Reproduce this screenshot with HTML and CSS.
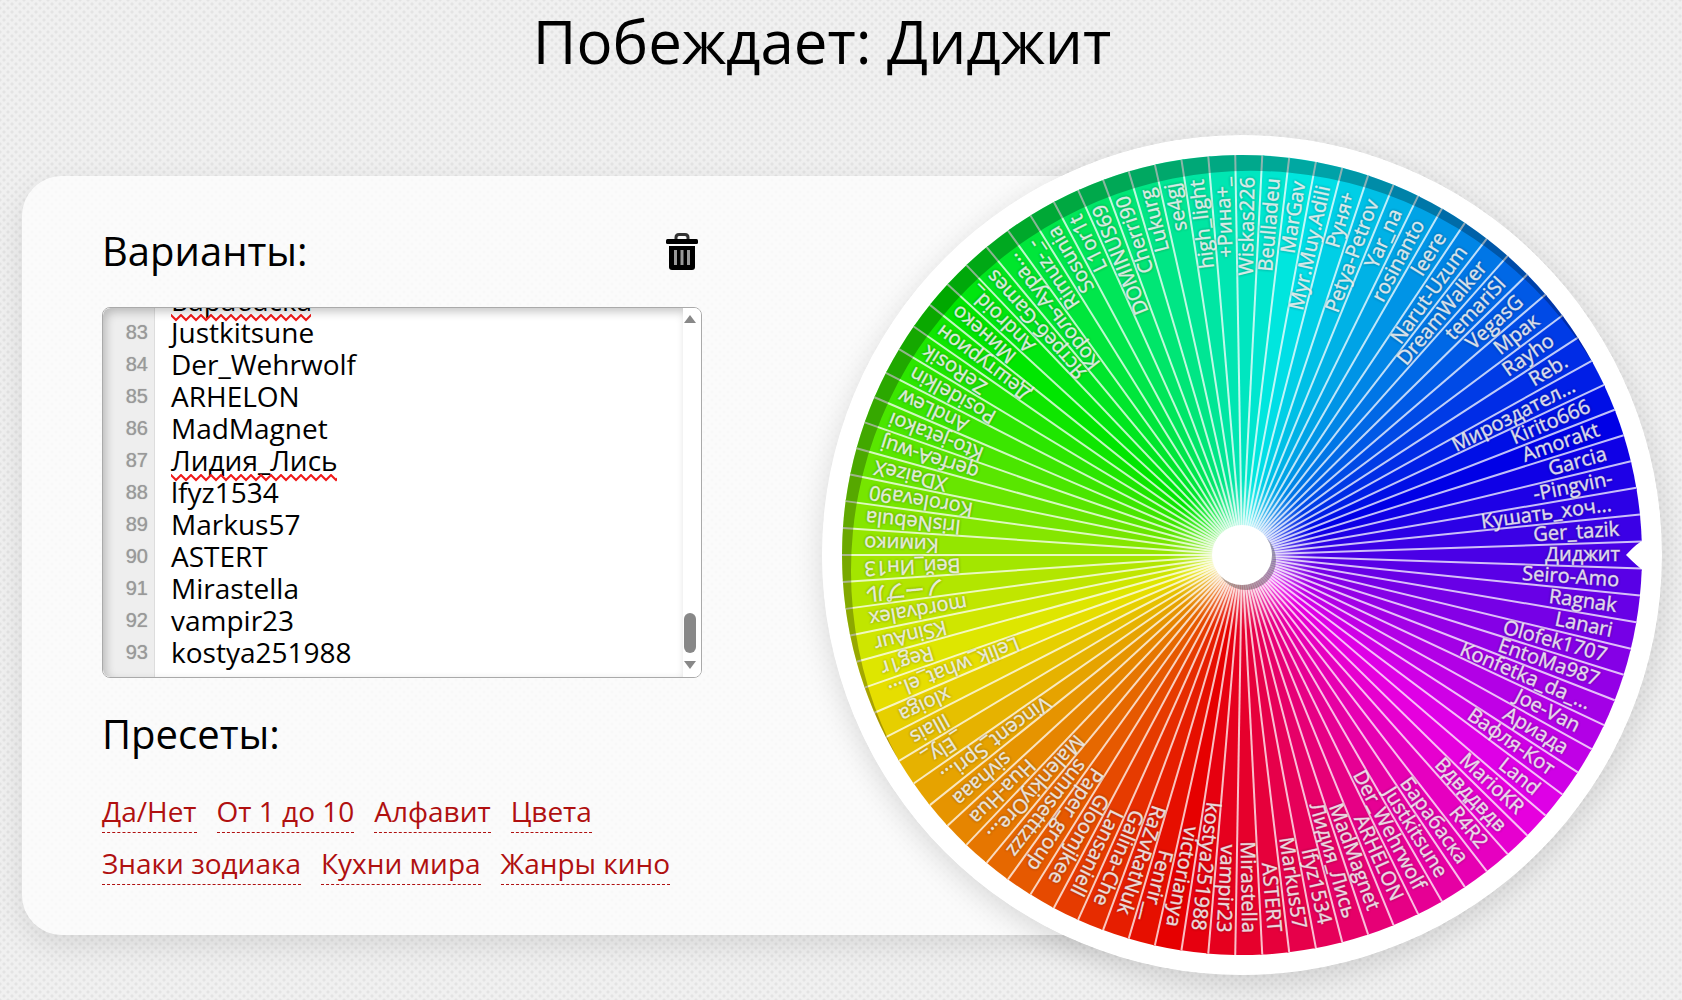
FILE: index.html
```html
<!DOCTYPE html>
<html lang="ru">
<head>
  <meta charset="utf-8">
  <title>Колесо фортуны</title>
  <link rel="stylesheet" href="styles.css">
</head>
<body>
  <main class="page">
    <h1 class="winner">Побеждает: Диджит</h1>
    <div class="stage">
      <section class="card">
        <div class="card-body">
          <div class="card-head">
            <h2 class="heading"><label for="variants">Варианты:</label></h2>
            <button class="clear" type="button" aria-label="Очистить">
              <svg viewBox="0 0 34 38" width="34" height="38" aria-hidden="true">
                <path d="M11 7V4.500Q11 1.500 14 1.500H20Q23 1.500 23 4.500V7" fill="none" stroke="#333" stroke-width="3"/>
                <rect x="1" y="6" width="32" height="5" rx="1.500"/>
                <path d="M4 13H30V34Q30 37 27 37H7Q4 37 4 34Z"/>
                <path d="M10.500 17V32M17 17V32M23.500 17V32" stroke="#999" stroke-width="3"/>
              </svg>
            </button>
          </div>
          <div class="editor">
            <div class="gutter" aria-hidden="true"><pre class="numbers" id="numbers"></pre></div>
            <textarea class="variants" id="variants" spellcheck="false"></textarea>
            <svg class="squiggle squiggle-top" aria-hidden="true"><rect width="100%" height="8" fill="url(#wave)"/></svg>
            <svg class="squiggle squiggle-mid" aria-hidden="true">
              <defs>
                <pattern id="wave" width="10" height="8" patternUnits="userSpaceOnUse">
                  <path d="M-1 0L5 6L11 0" fill="none" stroke="#f01818" stroke-width="2"/>
                </pattern>
              </defs>
              <rect width="100%" height="8" fill="url(#wave)"/>
            </svg>
            <div class="scrollbar" aria-hidden="true">
              <span class="arrow arrow-up"></span>
              <span class="thumb"></span>
              <span class="arrow arrow-down"></span>
            </div>
          </div>
          <h2 class="heading">Пресеты:</h2>
          <nav class="presets">
            <a href="#yesno">Да/Нет</a>
            <a href="#ten">От 1 до 10</a>
            <a href="#alphabet">Алфавит</a>
            <a href="#colors">Цвета</a>
            <a href="#zodiac">Знаки зодиака</a>
            <a href="#cuisines">Кухни мира</a>
            <a href="#genres">Жанры кино</a>
          </nav>
        </div>
      </section>
      <svg class="wheel" viewBox="-420 -420 840 840" role="img" aria-label="Колесо">
        <defs>
          <clipPath id="disc"><circle r="400"/></clipPath>
          <radialGradient id="glow">
            <stop offset="0" stop-color="#fff" stop-opacity=".7"/>
            <stop offset=".4" stop-color="#fff" stop-opacity=".4"/>
            <stop offset="1" stop-color="#fff" stop-opacity="0"/>
          </radialGradient>
        </defs>
        <circle r="420" fill="#fff"/>
        <g id="sectors"></g>
        <g id="labels" class="labels"></g>
        <path class="rim" clip-path="url(#disc)" fill-rule="evenodd" d="M-420 -420H420V420H-420ZM-391 16a400 400 0 1 0 800 0a400 400 0 1 0 -800 0Z"/>
        <path d="M410 -20L402 -15Q396 -13 384 0Q396 12 402 16L410 20Z" fill="#fff"/>
        <circle cx="4" cy="5" r="30" fill="#000" fill-opacity=".3"/>
        <circle r="30" fill="#fff"/>
      </svg>
    </div>
  </main>
  <script src="wheel.js"></script>
</body>
</html>
```
FILE: styles.css
```css
* {
  box-sizing: border-box;
}

body {
  margin: 0;
  font-family: "Open Sans", "Noto Sans", "Noto Sans CJK JP", sans-serif;
  color: #000;
  background-color: #f0f0f0;
  background-image:
    radial-gradient(circle, rgba(0, 0, 0, .055) 1px, transparent 2px),
    radial-gradient(circle, rgba(0, 0, 0, .055) 1px, transparent 2px);
  background-size: 8px 8px;
  background-position: 0 0, 4px 4px;
}

.page {
  min-height: 100vh;
  padding: 0 20px 24px 22px;
}

.winner {
  margin: 0;
  height: 135px;
  padding-right: 40px;
  font-size: 60px;
  font-weight: 400;
  line-height: 82px;
  text-align: center;
}

.stage {
  display: grid;
  grid-template-columns: minmax(0, 800fr) minmax(0, 401fr) minmax(0, 439fr);
  align-items: center;
}

.card {
  grid-area: 1 / 1 / 2 / 3;
  padding: 47px 80px 50px;
  border-radius: 40px;
  background: rgba(255, 255, 255, .75);
  box-shadow: 0 10px 30px rgba(0, 0, 0, .1);
}

.card-body {
  max-width: 600px;
}

.card-head {
  display: flex;
  justify-content: space-between;
  align-items: center;
}

.heading {
  margin: 0;
  font-size: 40px;
  font-weight: 400;
  line-height: 56px;
}

.clear {
  display: block;
  padding: 2px 0 0;
  margin-right: 3px;
  border: 0;
  background: none;
  line-height: 0;
}

.editor {
  position: relative;
  display: flex;
  height: 371px;
  margin: 28px 0;
  overflow: hidden;
  border: 1px solid #aaa;
  border-radius: 8px;
  background: #fff;
}

.editor::after {
  content: "";
  position: absolute;
  inset: 0 18px 0 0;
  box-shadow: inset 3px 4px 10px rgba(0, 0, 0, .22);
  border-radius: 8px 0 0 8px;
  pointer-events: none;
}

.gutter {
  width: 52px;
  overflow: hidden;
  border-right: 1px solid #ddd;
  background: #eee;
}

.numbers {
  margin: 0;
  padding: 9px 6px 9px 0;
  font: 20px/32px "Liberation Sans", Arial, sans-serif;
  text-align: right;
  color: #999;
  text-shadow: 0 0 1px #aaa;
}

.variants {
  flex: 1;
  min-width: 0;
  height: 100%;
  padding: 9px 16px;
  border: 0;
  outline: 0;
  resize: none;
  background: none;
  font: 28px/32px "Open Sans", "Noto Sans", "Noto Sans CJK JP", sans-serif;
  color: #000;
  white-space: pre;
  scrollbar-width: none;
}

.squiggle {
  position: absolute;
  left: 68px;
  height: 8px;
}

.squiggle-top {
  top: 6px;
  width: 140px;
}

.squiggle-mid {
  top: 166px;
  width: 166px;
}

.scrollbar {
  position: absolute;
  inset: 0 0 0 auto;
  width: 20px;
  padding: 7px 3px 8px 0;
  display: flex;
  flex-direction: column;
  align-items: center;
  background: #fff;
}

.arrow {
  border: 6px solid transparent;
}

.arrow-up {
  border-top: 0;
  border-bottom: 8px solid #888;
}

.arrow-down {
  border-bottom: 0;
  border-top: 8px solid #888;
}

.thumb {
  width: 12px;
  height: 40px;
  margin: auto 0 8px;
  border-radius: 6px;
  background: #888;
}

.presets {
  display: flex;
  flex-wrap: wrap;
  gap: 11px 20px;
  margin-top: 30px;
}

.presets a {
  padding-bottom: 2px;
  border-bottom: 1px dashed #b01010;
  font-size: 28px;
  line-height: 38px;
  color: #b01010;
  text-decoration: none;
}

.wheel {
  grid-area: 1 / 2 / 2 / 4;
  width: 100%;
  border-radius: 50%;
  box-shadow: 0 8px 30px rgba(0, 0, 0, .14);
}

.labels {
  font-size: 20px;
  fill: #fff;
  fill-opacity: .9;
  stroke: #fff;
  stroke-opacity: .4;
  stroke-width: 1;
  text-anchor: end;
  text-shadow: 0 0 3px rgba(0, 0, 0, .35);
}

.divider {
  stroke: #fff;
  stroke-opacity: .75;
  stroke-width: 2;
}

.rim {
  fill: #000;
  fill-opacity: .27;
}
```
FILE: wheel.js
```js
const names = [
  "victorianya", "Fenrir__", "RaZvRatNuk", "Galina-Che", "Lansaniell", "Gloomjkee",
  "Paper_group", "sunnsetttzzz", "MalenkiyOre...", "Hua-Hua", "sivhaaa", "Vincent_Spri...\u00a0",
  "_Ely_", "Illais", "xloiga", "Lelik_what_el...", "Reg1r", "KSinAur", "mordvalex",
  "ノープル", "Вей_Ин13", "Кимико", "IrisNebula", "Koroleva90", "XDaizeX", "qerfeA-wuj",
  "Kto-jetakoi", "AndLew", "Posidelkin", "ZeRosik", "Дештурион", "Минеко", "Android_",
  "Ястреб-Games", "Король-Аура...", "Rimuz-_-", "Sosunia", "L1or1t", "DOMINUS69",
  "Cherri90", "Lukurg", "se4gj", "high_light", "+Рина+_", "Wiskas226", "Beulladeu",
  "MarGav", "Myr.Muy.Adili", "Руня+", "Petya-Petrov", "Yar_na", "rosinanto", "leere",
  "Narut-Uzum", "DreamWalker", "temariSl", "VegasG", "Мрак", "Rayho", "Reb.",
  "Мироздател...\u00a0", "Kirito666", "Amorakt", "Garcia", "-Pingvin-", "Кушать_хоч...\u00a0",
  "Ger_tazik", "Диджит", "Seiro-Amo", "Ragnak", "Lanari", "Olofek1707", "EntoMa987",
  "Konfetka_da_...", "Joe-Van", "Ариада", "Вафля-Кот", "Land", "MarioKR", "Вдвддвдв",
  "R4R2", "Барабаска", "Justkitsune", "Der_Wehrwolf", "ARHELON", "MadMagnet",
  "Лидия_Лись", "lfyz1534", "Markus57", "ASTERT", "Mirastella", "vampir23", "kostya251988"
];

const NS = "http://www.w3.org/2000/svg";
const RADIUS = 400;
const LABEL_RADIUS = 378;
const winner = names.indexOf("Диджит");
const step = 360 / names.length;
const sectors = document.getElementById("sectors");
const labels = document.getElementById("labels");

function add(parent, tag, attributes) {
  const node = document.createElementNS(NS, tag);
  for (const key in attributes) node.setAttribute(key, attributes[key]);
  parent.appendChild(node);
  return node;
}

function edge(degrees) {
  const a = degrees * Math.PI / 180;
  return (RADIUS * Math.cos(a)).toFixed(2) + " " + (RADIUS * Math.sin(a)).toFixed(2);
}

names.forEach((name, i) => {
  const angle = (i - winner) * step;
  add(sectors, "path", {
    d: `M0 0L${edge(angle - step / 2)}A400 400 0 0 1 ${edge(angle + step / 2 + 0.3)}Z`,
    fill: `hsl(${i * step} 100% 45%)`
  });
  const label = add(labels, "text", { x: LABEL_RADIUS, y: 6, transform: `rotate(${angle})` });
  label.textContent = name;
});
names.forEach((name, i) => {
  add(sectors, "path", { class: "divider", d: `M0 0L${edge((i - winner + 0.5) * step)}` });
});
add(sectors, "circle", { r: 75, fill: "url(#glow)" });

const area = document.getElementById("variants");
const numbers = document.getElementById("numbers");
area.value = names.join("\n");
numbers.textContent = names.map((_, i) => i + 1).join("\n");
area.addEventListener("scroll", () => {
  numbers.parentElement.scrollTop = area.scrollTop;
});
area.scrollTop = area.scrollHeight;
numbers.parentElement.scrollTop = area.scrollTop;
```
